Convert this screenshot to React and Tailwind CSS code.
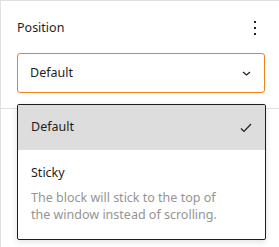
import React from 'react';

const App = () => {
  return (
    <div className="relative w-[279px] h-[247px] bg-white border-l border-t border-[#e0e0e0] text-[#1e1e1e] overflow-hidden" style={{ fontFamily: '"Noto Sans", "Open Sans", sans-serif' }}>
      <div className="pl-4 pr-[13px] pt-[17px] pb-[15px] border-b border-[#e0e0e0]">
        <div className="flex items-center justify-between h-5">
          <span className="text-[12.5px]">Position</span>
          <button className="w-6 h-6 flex flex-col items-center justify-center gap-[4px] mr-[-1px]">
            <span className="block w-[2px] h-[2px] bg-[#1e1e1e]" />
            <span className="block w-[2px] h-[2px] bg-[#1e1e1e]" />
            <span className="block w-[2px] h-[2px] bg-[#1e1e1e]" />
          </button>
        </div>
        <div className="mt-[15px] h-10 mr-[1px] flex items-center justify-between pl-[12px] pr-[13px] border-[1.5px] border-[#f0821e] rounded-[3px]">
          <span className="text-[12.5px]">Default</span>
          <svg width="9" height="5" viewBox="0 0 9 5" fill="none">
            <path d="M1 1l3.5 3L8 1" stroke="#1e1e1e" strokeWidth="1.2" />
          </svg>
        </div>
      </div>

      <div className="absolute left-[16px] top-[103px] w-[249px] bg-white border border-[#1e1e1e] rounded-[2px] shadow-[0_2px_6px_rgba(0,0,0,0.12)] overflow-hidden">
        <div className="h-[45px] bg-[#dddddd] flex items-center justify-between pl-[13px] pr-[13px]">
          <span className="text-[12.5px]">Default</span>
          <svg width="12" height="10" viewBox="0 0 12 10" fill="none">
            <path d="M1 5.5l3 3L11 1" stroke="#1e1e1e" strokeWidth="1.2" />
          </svg>
        </div>
        <div className="pl-[13px] pr-3 pt-[13px] pb-[16px]">
          <div className="text-[12.5px] leading-[20px]">Sticky</div>
          <div className="mt-[6px] text-[12.5px] leading-[17px] text-[#949494]">
            The block will stick to the top of<br />the window instead of scrolling.
          </div>
        </div>
      </div>
    </div>
  );
};

export default App;
